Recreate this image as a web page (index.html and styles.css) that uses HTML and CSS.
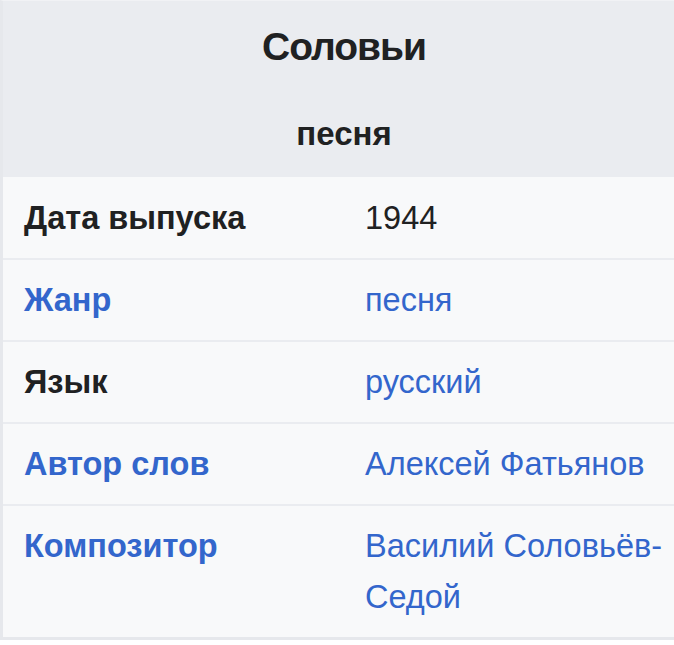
FILE: index.html
```html
<!DOCTYPE html>
<html lang="ru">
<head>
<meta charset="utf-8">
<link rel="stylesheet" href="styles.css">
</head>
<body>
<div class="infobox">
  <div class="head">
    <div class="title">Соловьи</div>
    <div class="subtitle">песня</div>
  </div>
  <div class="row">
    <div class="label">Дата выпуска</div>
    <div class="value">1944</div>
  </div>
  <div class="row">
    <div class="label"><a href="#">Жанр</a></div>
    <div class="value"><a href="#">песня</a></div>
  </div>
  <div class="row">
    <div class="label">Язык</div>
    <div class="value"><a href="#">русский</a></div>
  </div>
  <div class="row">
    <div class="label"><a href="#">Автор слов</a></div>
    <div class="value"><a href="#">Алексей Фатьянов</a></div>
  </div>
  <div class="row">
    <div class="label"><a href="#">Композитор</a></div>
    <div class="value"><a href="#">Василий Соловьёв-Седой</a></div>
  </div>
</div>
</body>
</html>
```
FILE: styles.css
```css
html, body {
  margin: 0;
  padding: 0;
  background: #ffffff;
  overflow: hidden;
}
body {
  font-family: "Liberation Sans", Arial, sans-serif;
  color: #202122;
  font-size: 32.5px;
  line-height: 51px;
}
a {
  color: #3366cc;
  text-decoration: none;
}
.infobox {
  width: 685px;
  background: #f8f9fa;
  border-left: 3px solid #e6e8ec;
  border-top: 1px solid #f1f2f5;
  border-bottom: 3px solid #e6e8ec;
  box-sizing: border-box;
}
.head {
  background: #eaecf0;
  text-align: center;
  font-weight: bold;
  height: 176px;
  display: flex;
  flex-direction: column;
}
.title {
  font-size: 39px;
  letter-spacing: -1px;
  line-height: 48px;
  padding-top: 22px;
}
.subtitle {
  font-size: 33px;
  line-height: 40px;
  padding-top: 43px;
}
.row {
  display: grid;
  grid-template-columns: 362px 1fr;
  padding: 15px 0 14px;
  border-top: 2px solid #eaecf0;
}
.row:nth-child(2) {
  border-top: none;
  padding-top: 16px;
}
.label {
  padding-left: 21px;
  font-weight: bold;
}
.value {
  padding-right: 0;
}
```
